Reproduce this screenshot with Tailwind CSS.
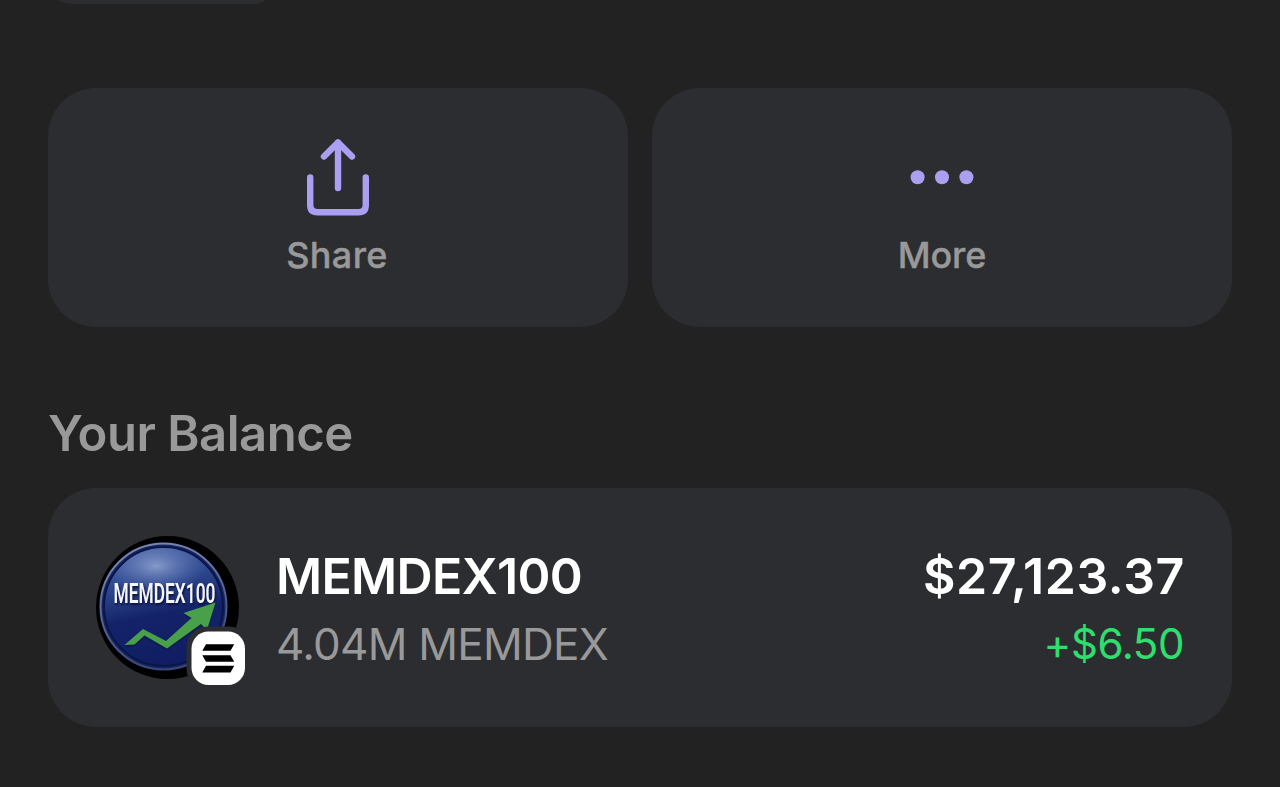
<!DOCTYPE html>
<html lang="en">
<head>
<meta charset="utf-8">
<title>Your Balance</title>
<script src="https://cdn.jsdelivr.net/npm/@tailwindcss/browser@4"></script>
</head>
<body class="h-[787px] w-[1280px] overflow-hidden bg-[#222222] font-['Inter','Liberation_Sans',sans-serif]">
<main class="flex flex-col px-12">
  <div class="-mt-11 h-12 w-[228px] rounded-[24px] bg-[#2c2d31]"></div>

  <section class="mt-[84px] grid grid-cols-2 gap-6">
    <button class="flex h-[239px] flex-col items-center rounded-[48px] bg-[#2c2d31] pt-12">
      <svg class="h-[84px] w-[84px]" viewBox="0 0 84 84" fill="none" stroke="#ab9ff2" stroke-width="6.4" stroke-linecap="round" stroke-linejoin="round">
        <path d="M42 52V6.5M28 20.5L42 6.5L56 20.5"/>
        <path d="M14.2 41.5V69Q14.2 76.3 21.5 76.3H62.5Q69.8 76.3 69.8 69V41.5"/>
      </svg>
      <span class="mt-[13px] -ml-0.5 text-[36px] leading-[44px] font-medium tracking-[0.4px] text-[#999999] [-webkit-text-stroke:0.4px_#999999]">Share</span>
    </button>
    <button class="flex h-[239px] flex-col items-center rounded-[48px] bg-[#2c2d31] pt-12">
      <svg class="h-[84px] w-[84px]" viewBox="0 0 84 84" fill="#ab9ff2">
        <circle cx="17.6" cy="41.3" r="7"/><circle cx="42" cy="41.3" r="7"/><circle cx="66.4" cy="41.3" r="7"/>
      </svg>
      <span class="mt-[13px] text-[36px] leading-[44px] font-medium tracking-[-0.1px] text-[#999999] [-webkit-text-stroke:0.4px_#999999]">More</span>
    </button>
  </section>

  <h2 class="mt-[77px] h-[60px] text-[49px] leading-[60px] font-semibold tracking-[-0.5px] text-[#999999]">Your Balance</h2>

  <section class="mt-[24px] flex h-[239px] items-start rounded-[48px] bg-[#2c2d31] px-12 pt-12">
    <div class="h-[152px] w-[152px] shrink-0">
      <svg class="h-[152px] w-[152px]" viewBox="0 0 152 152">
        <defs>
          <linearGradient id="ball" x1="0.3" y1="0" x2="0.5" y2="1">
            <stop offset="0" stop-color="#4a63a6"/><stop offset=".3" stop-color="#2d478e"/><stop offset=".58" stop-color="#142369"/><stop offset="1" stop-color="#101d63"/>
          </linearGradient>
          <radialGradient id="shine">
            <stop offset="0" stop-color="#9fb0d8" stop-opacity=".75"/><stop offset="1" stop-color="#6d87c2" stop-opacity="0"/>
          </radialGradient>
          <linearGradient id="rim" x1="0" y1="0" x2="0.3" y2="1">
            <stop offset="0" stop-color="#8190bb"/><stop offset=".5" stop-color="#5c6a9c"/><stop offset="1" stop-color="#39477c"/>
          </linearGradient>
          <clipPath id="face"><circle cx="67.5" cy="70.5" r="58.5"/></clipPath>
        </defs>
        <circle cx="71.5" cy="71.5" r="71.5" fill="#000"/>
        <circle cx="67.5" cy="70.5" r="63" fill="#17265f" stroke="url(#rim)" stroke-width="2"/>
        <circle cx="67.5" cy="70.5" r="59.5" fill="url(#ball)" stroke="#0a1649" stroke-width="2"/>
        <ellipse cx="60" cy="30" rx="50" ry="27" fill="url(#shine)" clip-path="url(#face)"/>
        <text class="drop-shadow-[1px_2px_1px_#08103a]" x="17.5" y="67" textLength="102" lengthAdjust="spacingAndGlyphs" font-family="Roboto" font-size="27" font-weight="600" fill="#f5f6fa">MEMDEX100</text>
        <path d="M28.500 109L47 93L70 105L95.500 82L87.500 77L119.500 66.500L111 94L105 88L71 112.500L48.500 99.500L38.500 108.500Z" fill="#0a1740" transform="translate(0 2)" opacity=".6"/>
        <path d="M28.500 109L47 93L70 105L95.500 82L87.500 77L119.500 66.500L111 94L105 88L71 112.500L48.500 99.500L38.500 108.500Z" fill="#48a14a"/>
        <rect x="90.500" y="90.500" width="63.500" height="63.500" rx="21" fill="#2c2d31"/>
        <rect x="95.500" y="95.500" width="53.500" height="53.500" rx="17" fill="#fff"/>
        <path d="M110 108.200H138.200L134.500 114.800H106.300ZM106.300 119.200H134.500L138.200 125.800H110ZM110 129.800H138.200L134.500 136.400H106.300Z" fill="#000"/>
      </svg>
    </div>
    <div class="ml-[28px] flex min-w-0 flex-1 flex-col pt-[10px]">
      <div class="flex h-[60px] items-center justify-between text-[50px] leading-[60px] font-semibold text-white">
        <span class="tracking-[-0.65px]">MEMDEX100</span><span class="-mr-px tracking-[0.6px]">$27,123.37</span>
      </div>
      <div class="mt-[11px] flex h-[54px] items-center justify-between text-[44px] leading-[54px]">
        <span class="tracking-[-0.75px] text-[#999999]">4.04M MEMDEX</span><span class="text-[42px] tracking-[-0.4px] text-[#2de06e]">+$6.50</span>
      </div>
    </div>
  </section>
</main>
</body>
</html>
